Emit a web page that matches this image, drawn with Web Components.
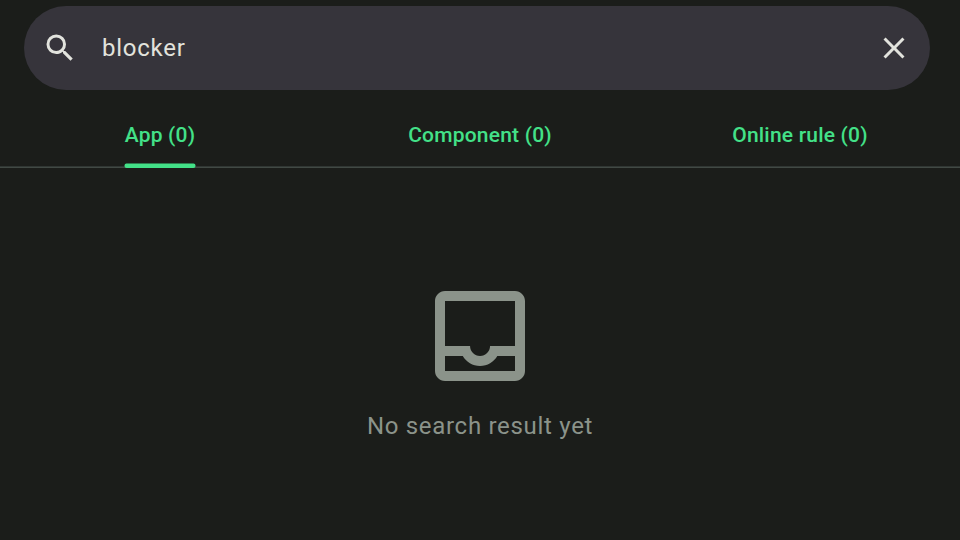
<!DOCTYPE html>
<html lang="en"><head><meta charset="utf-8"><title>Search</title>
<style>html,body{margin:0;height:100%;background:#1b1d1a;overflow:hidden}</style></head><body>
<search-screen></search-screen>
<script>
const define=(name,html)=>customElements.define(name,class extends HTMLElement{
  constructor(){super();this.attachShadow({mode:'open'}).innerHTML=html;}
});
define('search-field',`<style>
:host{display:flex;align-items:center;box-sizing:border-box;height:84px;margin:6px 30px 0 24px;padding:0 18px;border-radius:42px;background:#36343b;color:#e2e3dd}
svg{width:36px;height:36px;fill:currentColor;flex:none}
.q{flex:1;margin-left:24px;font-size:24px;line-height:36px;letter-spacing:.75px}
</style><svg viewBox="0 0 24 24"><path d="M15.5 14h-.79l-.28-.27A6.47 6.47 0 0 0 16 9.5 6.5 6.5 0 1 0 9.5 16c1.61 0 3.09-.59 4.23-1.57l.27.28v.79l5 4.99L20.49 19l-4.99-5zm-6 0C7.01 14 5 11.99 5 9.5S7.01 5 9.5 5 14 7.01 14 9.5 11.99 14 9.5 14z"/></svg>
<div class="q"><slot></slot></div>
<svg viewBox="0 0 24 24"><path d="M19 6.41 17.59 5 12 10.59 6.41 5 5 6.41 10.59 12 5 17.59 6.41 19 12 13.41 17.59 19 19 17.59 13.41 12z"/></svg>`);
define('tab-item',`<style>
:host{display:flex;justify-content:center;height:78px;color:#43e188;font-size:21px;font-weight:500;letter-spacing:.2px}
.label{display:grid;grid-template-rows:1fr 5px;justify-items:center}
span{line-height:24px;padding-top:33px}
svg{display:none;width:72px;height:5px;margin:0 -1px;fill:#43e188}
:host([selected]) svg{display:block}
</style><div class="label"><span><slot></slot></span><svg viewBox="0 0 72 5"><rect x=".5" y=".5" width="71" height="4.5" rx="2"/></svg></div>`);
define('tab-bar',`<style>
:host{display:grid;grid-template-columns:repeat(3,1fr);background:linear-gradient(#303633 50%,#414944 50%) 0 76px/100% 2px no-repeat}
</style><slot></slot>`);
define('empty-state',`<style>
:host{display:flex;flex-direction:column;align-items:center;padding-top:108px;color:#8b938a}
svg{width:120px;height:120px;fill:currentColor}
p{margin:12px 0 0;font-size:24px;line-height:36px;letter-spacing:.7px}
</style><svg viewBox="0 0 24 24"><path d="M19 3H5c-1.1 0-2 .9-2 2v14c0 1.1.9 2 2 2h14c1.1 0 2-.9 2-2V5c0-1.1-.9-2-2-2zm0 16H5v-3h3.56c.69 1.19 1.97 2 3.45 2s2.75-.81 3.45-2H19v3zm0-5h-4.99c0 1.1-.9 2-2 2s-2-.9-2-2H5V5h14v9z"/></svg><p><slot></slot></p>`);
define('search-screen',`<style>
:host{display:flex;flex-direction:column;height:540px;width:960px;background:#1b1d1a;font-family:Roboto,sans-serif}
</style><search-field>blocker</search-field>
<tab-bar><tab-item selected>App (0)</tab-item><tab-item>Component (0)</tab-item><tab-item>Online rule (0)</tab-item></tab-bar>
<empty-state>No search result yet</empty-state>`);
</script></body></html>
